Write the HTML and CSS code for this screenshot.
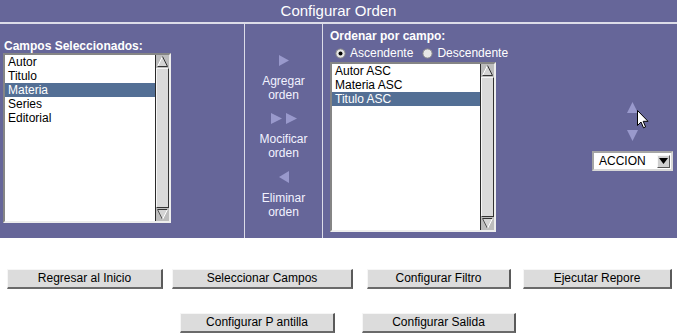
FILE: index.html
```html
<!DOCTYPE html>
<html>
<head>
<meta charset="utf-8">
<title>Configurar Orden</title>
<link rel="stylesheet" href="styles.css">
</head>
<body>
<div class="header">Configurar Orden</div>
<div class="panel">
  <div class="col-left">
    <div class="label">Campos Seleccionados:</div>
    <div class="listbox list-left">
      <ul class="items">
        <li>Autor</li>
        <li>Titulo</li>
        <li class="sel">Materia</li>
        <li>Series</li>
        <li>Editorial</li>
      </ul>
      <div class="scrollbar">
        <div class="sb-btn"><svg width="13" height="13" viewBox="0 0 13 13"><polygon points="6.5,1.5 11.5,11.5 1.5,11.5" fill="#d4d4d4"/><polyline points="1.5,11.5 6.5,1.5" fill="none" stroke="#fff"/><polyline points="6.5,1.5 11.5,11.5 1.5,11.5" fill="none" stroke="#333"/></svg></div>
        <div class="thumb"></div>
        <div class="sb-btn"><svg width="13" height="13" viewBox="0 0 13 13"><polygon points="1.5,1.5 11.5,1.5 6.5,11.5" fill="#d4d4d4"/><polyline points="1.5,1.5 11.5,1.5" fill="none" stroke="#333"/><polyline points="1.5,1.5 6.5,11.5" fill="none" stroke="#555"/><polyline points="6.5,11.5 11.5,1.5" fill="none" stroke="#fff"/></svg></div>
      </div>
    </div>
  </div>
  <div class="col-mid">
    <svg class="arrow" width="10" height="11" viewBox="0 0 10 11"><polygon points="0,0 10,5.5 0,11" fill="#9999cc"/></svg>
    <div class="mid-text">Agregar<br>orden</div>
    <svg class="arrow" width="26" height="11" viewBox="0 0 26 11"><polygon points="0,0 11,5.5 0,11" fill="#9999cc"/><polygon points="15,0 26,5.5 15,11" fill="#9999cc"/></svg>
    <div class="mid-text">Mocificar<br>orden</div>
    <svg class="arrow" width="10" height="12" viewBox="0 0 10 12"><polygon points="10,0 0,6 10,12" fill="#9999cc"/></svg>
    <div class="mid-text">Eliminar<br>orden</div>
  </div>
  <div class="col-right">
    <div class="order-main">
      <div class="label">Ordenar por campo:</div>
      <div class="radios">
        <span class="radio"><svg width="11" height="11" viewBox="0 0 11 11"><circle cx="5.5" cy="5.5" r="4.6" fill="#e6e6e6" stroke="#8a8a8a"/><circle cx="5.5" cy="5.5" r="2" fill="#000"/></svg>Ascendente</span>
        <span class="radio"><svg width="11" height="11" viewBox="0 0 11 11"><circle cx="5.5" cy="5.5" r="4.6" fill="#e6e6e6" stroke="#8a8a8a"/></svg>Descendente</span>
      </div>
      <div class="listbox list-right">
        <ul class="items">
          <li>Autor ASC</li>
          <li>Materia ASC</li>
          <li class="sel">Titulo ASC</li>
        </ul>
        <div class="scrollbar">
          <div class="sb-btn"><svg width="13" height="13" viewBox="0 0 13 13"><polygon points="6.5,1.5 11.5,11.5 1.5,11.5" fill="#d4d4d4"/><polyline points="1.5,11.5 6.5,1.5" fill="none" stroke="#fff"/><polyline points="6.5,1.5 11.5,11.5 1.5,11.5" fill="none" stroke="#333"/></svg></div>
          <div class="thumb"></div>
          <div class="sb-btn"><svg width="13" height="13" viewBox="0 0 13 13"><polygon points="1.5,1.5 11.5,1.5 6.5,11.5" fill="#d4d4d4"/><polyline points="1.5,1.5 11.5,1.5" fill="none" stroke="#333"/><polyline points="1.5,1.5 6.5,11.5" fill="none" stroke="#555"/><polyline points="6.5,11.5 11.5,1.5" fill="none" stroke="#fff"/></svg></div>
        </div>
      </div>
    </div>
    <div class="controls">
      <svg class="updown" width="11" height="11" viewBox="0 0 11 11"><polygon points="5.5,0 11,11 0,11" fill="#9999cc"/></svg>
      <svg class="updown down" width="11" height="11" viewBox="0 0 11 11"><polygon points="0,0 11,0 5.5,11" fill="#9999cc"/></svg>
      <svg class="cursor" width="12" height="19" viewBox="0 0 12 19"><path d="M0.5 0.5 L0.5 15.5 L4 12 L6.5 17.8 L8.6 16.9 L6.2 11.3 L11 11.3 Z" fill="#fff" stroke="#000" stroke-width="1"/></svg>
      <div class="select">
        <span class="select-text">ACCION</span>
        <span class="select-btn"><svg width="9" height="6" viewBox="0 0 9 6"><polygon points="0,0 9,0 4.5,6" fill="#000"/></svg></span>
      </div>
    </div>
  </div>
</div>
<div class="buttons row1">
  <div class="btn b1">Regresar al Inicio</div>
  <div class="btn b2">Seleccionar Campos</div>
  <div class="btn b3">Configurar Filtro</div>
  <div class="btn b4">Ejecutar Repore</div>
</div>
<div class="buttons row2">
  <div class="btn b5">Configurar P antilla</div>
  <div class="btn b6">Configurar Salida</div>
</div>
</body>
</html>
```

FILE: styles.css
```css
html, body {
  margin: 0;
  padding: 0;
  background: #ffffff;
  font-family: "Liberation Sans", Arial, sans-serif;
  font-size: 12px;
}

.header {
  height: 22px;
  line-height: 22px;
  background: #666699;
  color: #ffffff;
  font-size: 15px;
  text-align: center;
  border-bottom: 2px solid #dcdce8;
}

.panel {
  display: flex;
  height: 214px;
  background: #666699;
  color: #ffffff;
}

.col-left {
  width: 244px;
  padding-top: 16px;
  box-sizing: border-box;
}

.label {
  font-weight: bold;
  line-height: 13px;
  white-space: nowrap;
}

.col-left .label {
  margin-left: 4px;
}

.listbox {
  display: flex;
  background: #ffffff;
  border-style: solid;
  border-width: 2px;
  border-color: #858585 #ededed #ededed #858585;
  color: #000000;
}

.list-left {
  margin-left: 3px;
  width: 164px;
  height: 166px;
}

.list-right {
  margin-top: 2px;
  width: 162px;
  height: 166px;
}

.items {
  list-style: none;
  margin: 0;
  padding: 0;
  flex: 1;
}

.items li {
  height: 14px;
  line-height: 14px;
  padding-left: 3px;
  white-space: nowrap;
}

.items li.sel {
  background: #536f95;
  color: #ffffff;
}

.scrollbar {
  width: 13px;
  display: flex;
  flex-direction: column;
  background: #bdbdbd;
  border-left: 1px solid #2a2a2a;
}

.sb-btn {
  height: 13px;
}

.sb-btn svg {
  display: block;
}

.thumb {
  flex: 1;
  background: #dadada;
  border-style: solid;
  border-width: 1px;
  border-color: #f6f6f6 #333333 #333333 #f6f6f6;
}

.col-mid {
  width: 77px;
  border-left: 1px solid #dcdce8;
  border-right: 1px solid #dcdce8;
  display: flex;
  flex-direction: column;
  align-items: center;
  padding-top: 31px;
  box-sizing: content-box;
}

.arrow {
  display: block;
  margin-bottom: 8px;
}

.mid-text {
  line-height: 14px;
  text-align: center;
  color: #f2f2ff;
  margin-bottom: 11px;
}

.col-right {
  flex: 1;
  display: flex;
  padding-left: 7px;
  padding-top: 6px;
}

.radios {
  margin-top: 3px;
  height: 14px;
  line-height: 14px;
  display: flex;
  white-space: nowrap;
}

.radio {
  display: flex;
  align-items: center;
  margin-right: 4px;
}

.radio svg {
  margin-left: 5px;
  margin-right: 4px;
}

.controls {
  position: relative;
  margin-left: auto;
  margin-right: 4px;
  width: 81px;
  padding-top: 72px;
  display: flex;
  flex-direction: column;
  align-items: center;
}

.updown {
  display: block;
  margin-left: -1px;
}

.updown.down {
  margin-top: 17px;
  margin-bottom: 10px;
}

.cursor {
  position: absolute;
  left: 45px;
  top: 80px;
}

.select {
  width: 81px;
  height: 20px;
  box-sizing: border-box;
  background: #ffffff;
  border-style: solid;
  border-width: 2px;
  border-color: #a5a5a5 #d8d8d8 #d8d8d8 #a5a5a5;
  color: #000000;
  display: flex;
  align-items: center;
}

.select-text {
  flex: 1;
  padding-left: 5px;
  line-height: 16px;
}

.select-btn {
  width: 11px;
  height: 11px;
  margin-right: 1px;
  background: #cfcfcf;
  border-style: solid;
  border-width: 1px;
  border-color: #f8f8f8 #555555 #555555 #f8f8f8;
  display: flex;
  align-items: center;
  justify-content: center;
}

.select-btn svg {
  display: block;
}

.buttons {
  display: flex;
}

.row1 {
  margin-top: 31px;
  padding-left: 7px;
}

.row2 {
  margin-top: 24px;
  padding-left: 180px;
}

.btn {
  height: 20px;
  box-sizing: border-box;
  background: #dcdcdc;
  border-style: solid;
  border-width: 1px 2px 2px 1px;
  border-color: #f6f6f6 #5a5a5a #6a6a6a #f6f6f6;
  color: #000000;
  text-align: center;
  line-height: 17px;
  white-space: nowrap;
}

.b1 { width: 156px; }
.b2 { width: 181px; margin-left: 9px; }
.b3 { width: 144px; margin-left: 14px; }
.b4 { width: 149px; margin-left: 12px; }
.b5 { width: 155px; }
.b6 { width: 154px; margin-left: 27px; }
```
